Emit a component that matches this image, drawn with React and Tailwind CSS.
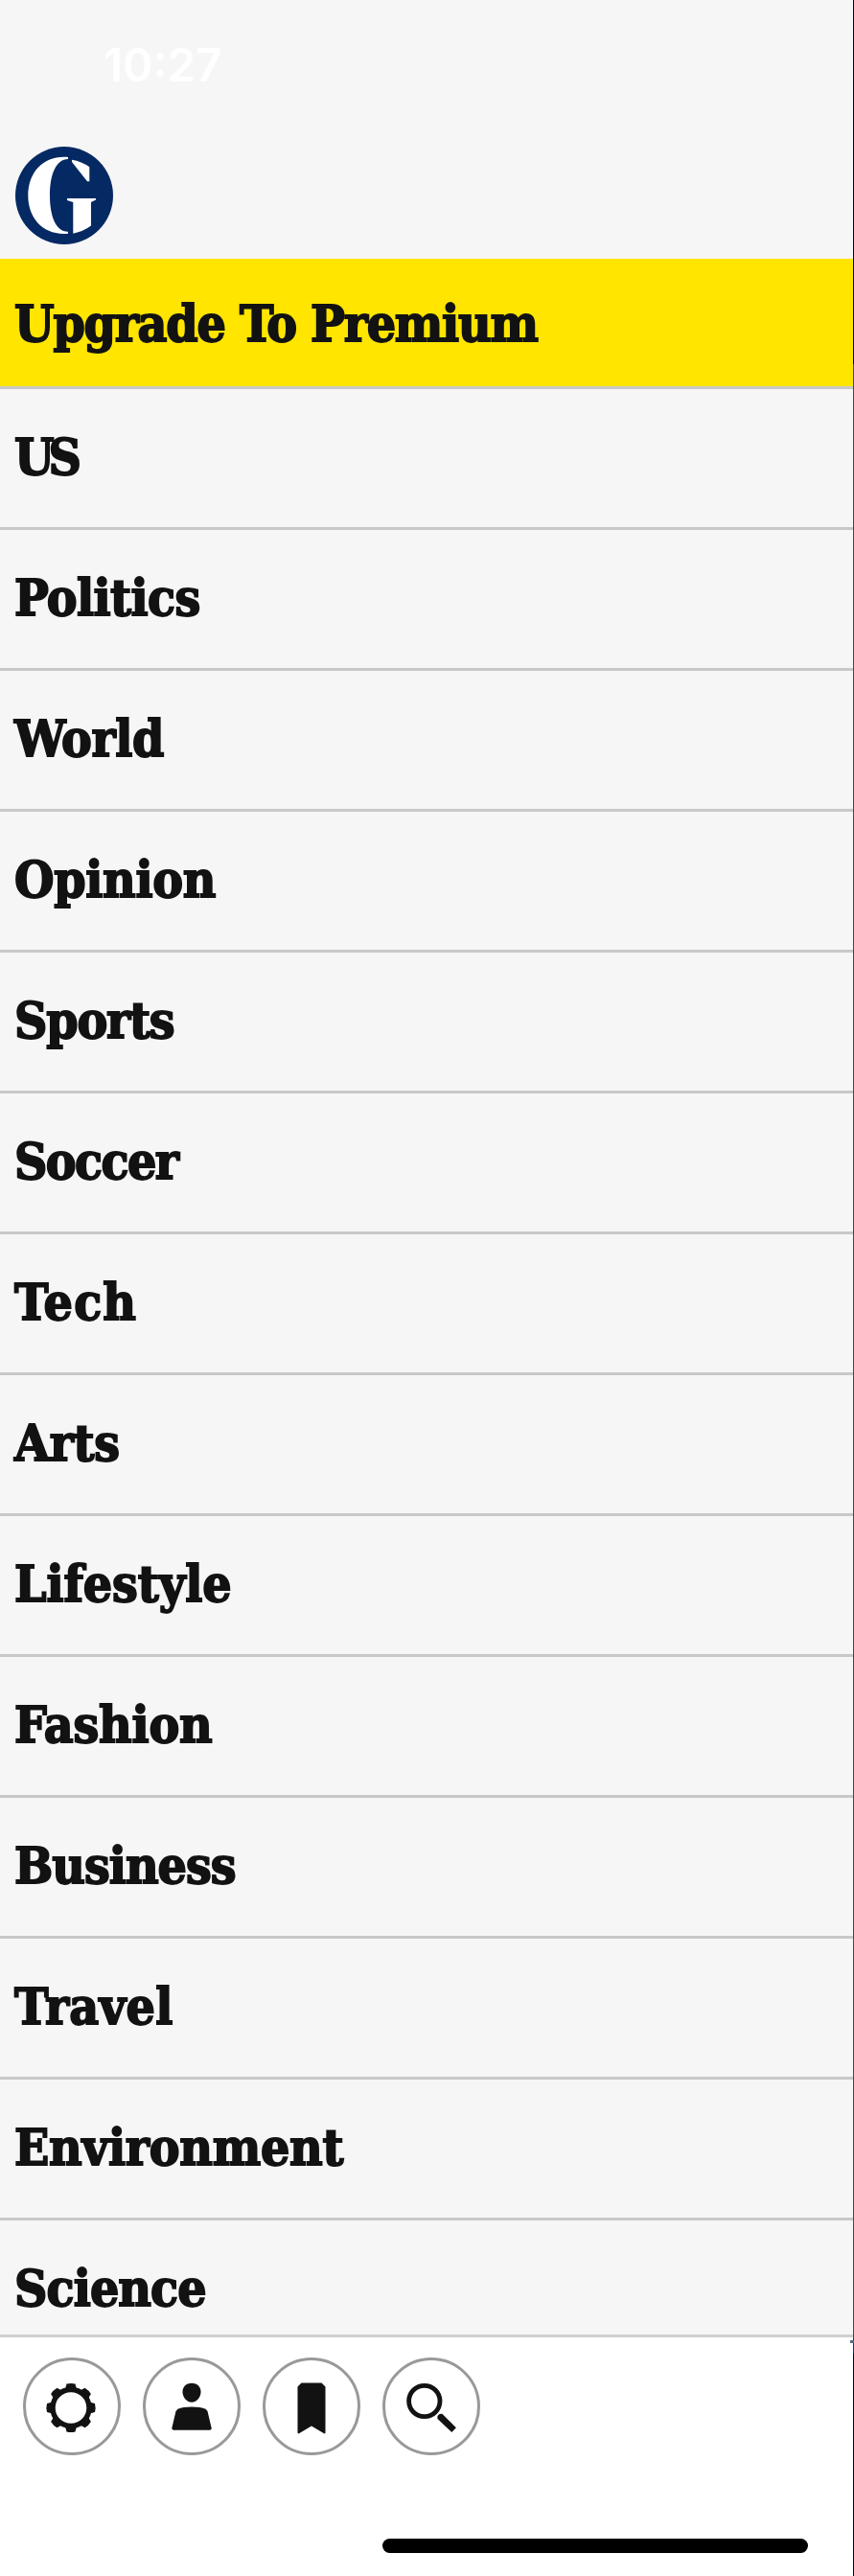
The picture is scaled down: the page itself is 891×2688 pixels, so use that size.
const sections = [
  ['US', 'tracking-[-6px]'],
  ['Politics', 'tracking-[-0.6px]'],
  ['World', 'tracking-[-0.3px]'],
  ['Opinion', 'tracking-[-0.3px]'],
  ['Sports', 'tracking-[-1.2px]'],
  ['Soccer', 'tracking-[-1.6px]'],
  ['Tech', 'tracking-[1.2px]'],
  ['Arts', 'tracking-[-0.3px]'],
  ['Lifestyle', 'tracking-[-0.1px]'],
  ['Fashion', 'tracking-[-0.2px]'],
  ['Business', 'tracking-[-1px]'],
  ['Travel', 'tracking-[0.3px]'],
  ['Environment', 'tracking-[-0.25px]'],
  ['Science', 'tracking-[-0.9px]'],
];

function Logo() {
  return (
    <svg className="block size-[102px]" viewBox="0 0 102 102" aria-label="Home">
      <circle cx="51" cy="51" r="51" fill="#052962" />
      <g fill="#fff">
        <path d="M55 11C29 9 13.300 27 13.300 51s16 42 41.700 39.700v-2C43 89 36 74 36 51s7-38 19-38z" />
        <path d="M59 13.700q10 1.500 18.300 7.500v15H75L59 16z" />
        <path d="M54 54h30v1.500L79 58v24.500q-8 6-18.700 8.200V58L54 56z" />
      </g>
    </svg>
  );
}

function GearIcon() {
  const teeth = [0, 45, 90, 135, 180, 225, 270, 315];
  return (
    <svg className="size-[95px]" viewBox="0 0 95 95">
      <circle cx="47" cy="48.500" r="19" fill="none" stroke="#121212" strokeWidth="5.400" />
      {teeth.map((angle) => (
        <path
          key={angle}
          d="M40.500 31l2-7.500q4.500-1.200 9 0l2 7.500z"
          fill="#121212"
          transform={`rotate(${angle} 47 48.5)`}
        />
      ))}
    </svg>
  );
}

function PersonIcon() {
  return (
    <svg className="size-[95px]" viewBox="0 0 95 95" fill="#121212">
      <path d="M48 22.800c6 0 9.800 4 9.500 9.700-.3 5.500-4.900 10.300-9.500 10.300s-9.200-4.800-9.500-10.300c-.3-5.700 3.500-9.700 9.500-9.700z" />
      <path d="M48 47.500c6 0 11 .8 14.500 2.300l2 2.200 4.300 18.300-1.500 1.500H28.700l-1.500-1.500L31.500 52l2-2.200C37 48.300 42 47.500 48 47.500z" />
    </svg>
  );
}

function BookmarkIcon() {
  return (
    <svg className="size-[95px]" viewBox="0 0 95 95" fill="#121212">
      <path d="M36.500 22.500h21l4 4v48.300l-1 .7L47 67.500l-13.500 8-1-.7V26.500z" />
    </svg>
  );
}

function SearchIcon() {
  return (
    <svg className="size-[95px]" viewBox="0 0 95 95">
      <circle cx="39.800" cy="41.500" r="16.200" fill="none" stroke="#121212" strokeWidth="4.800" />
      <path d="M53.300 57.700q1.200-3.400 5-2.900L72.900 69.300l-4.600 4.700L53.500 60z" fill="#121212" />
    </svg>
  );
}

function RoundButton({ label, children }) {
  return (
    <button
      aria-label={label}
      className="flex size-[102px] shrink-0 items-center justify-center rounded-full border-[3px] border-[#999] bg-white"
    >
      {children}
    </button>
  );
}

export default function App() {
  return (
    <div className="relative flex h-[2688px] w-[891px] overflow-hidden bg-[#f6f6f6] text-[#121212]">
      <div className="flex w-[890px] flex-col">
        <header className="flex h-[270px] shrink-0 flex-col pl-4">
          <time className="mt-[38px] ml-[92px] block h-[60px] font-[Inter,sans-serif] text-[47.500px] leading-[60px] font-semibold text-white">
            10:27
          </time>
          <div className="mt-[55px]">
            <Logo />
          </div>
        </header>
        <nav className="flex h-[2166px] shrink-0 flex-col overflow-hidden font-['DejaVu_Serif_Condensed','DejaVu_Serif',serif] text-[53px] font-bold whitespace-nowrap [-webkit-text-stroke:1.8px_#121212]">
          <a className="flex h-[136px] shrink-0 items-center border-b-[3px] border-[#c8c8c8] bg-[#ffe500] pt-[3px] pl-[15px] tracking-[-1.2px]">
            <span>Upgrade To Premium</span>
          </a>
          {sections.map(([name, tracking]) => (
            <a
              key={name}
              className="flex h-[147px] shrink-0 items-center border-b-[3px] border-[#c8c8c8] pb-[2px] pl-[15px]"
            >
              <span className={tracking}>{name}</span>
            </a>
          ))}
        </nav>
        <footer className="flex flex-1 flex-col border-t-[3px] border-[#cfcfcf] bg-white">
          <div className="mt-[21px] flex gap-[23.300px] pl-[23.500px]">
            <RoundButton label="Settings"><GearIcon /></RoundButton>
            <RoundButton label="Profile"><PersonIcon /></RoundButton>
            <RoundButton label="Saved"><BookmarkIcon /></RoundButton>
            <RoundButton label="Search"><SearchIcon /></RoundButton>
          </div>
          <div className="mt-[87px] ml-[399px] h-[15px] w-[444px] rounded-full bg-black" />
        </footer>
      </div>
      <div className="flex w-px flex-col bg-[#00050f]">
        <div className="mt-[380px] h-[2060px] bg-[#444]" />
        <div className="h-[16px] bg-[#003a55]" />
      </div>
      <div className="absolute top-[2442px] right-0 h-[3px] w-1 bg-[#5a6a7c]" />
    </div>
  );
}
